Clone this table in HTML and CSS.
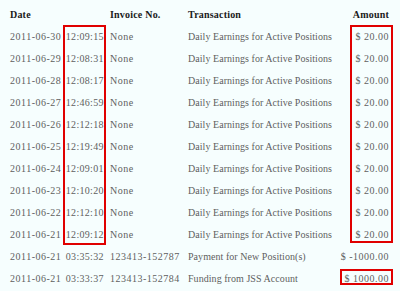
FILE: index.html
```html
<!DOCTYPE html>
<html>
<head>
<meta charset="utf-8">
<link rel="stylesheet" href="styles.css">
</head>
<body>
<div class="page">
  <div class="row head">
    <div class="c-date">Date</div>
    <div class="c-inv">Invoice No.</div>
    <div class="c-tr">Transaction</div>
    <div class="c-amt">Amount</div>
  </div>
  <div class="row"><div class="c-date">2011-06-30 <span class="tm">12:09:15</span></div><div class="c-inv">None</div><div class="c-tr">Daily Earnings for Active Positions</div><div class="c-amt">$ 20.00</div></div>
  <div class="row"><div class="c-date">2011-06-29 <span class="tm">12:08:31</span></div><div class="c-inv">None</div><div class="c-tr">Daily Earnings for Active Positions</div><div class="c-amt">$ 20.00</div></div>
  <div class="row"><div class="c-date">2011-06-28 <span class="tm">12:08:17</span></div><div class="c-inv">None</div><div class="c-tr">Daily Earnings for Active Positions</div><div class="c-amt">$ 20.00</div></div>
  <div class="row"><div class="c-date">2011-06-27 <span class="tm">12:46:59</span></div><div class="c-inv">None</div><div class="c-tr">Daily Earnings for Active Positions</div><div class="c-amt">$ 20.00</div></div>
  <div class="row"><div class="c-date">2011-06-26 <span class="tm">12:12:18</span></div><div class="c-inv">None</div><div class="c-tr">Daily Earnings for Active Positions</div><div class="c-amt">$ 20.00</div></div>
  <div class="row"><div class="c-date">2011-06-25 <span class="tm">12:19:49</span></div><div class="c-inv">None</div><div class="c-tr">Daily Earnings for Active Positions</div><div class="c-amt">$ 20.00</div></div>
  <div class="row"><div class="c-date">2011-06-24 <span class="tm">12:09:01</span></div><div class="c-inv">None</div><div class="c-tr">Daily Earnings for Active Positions</div><div class="c-amt">$ 20.00</div></div>
  <div class="row"><div class="c-date">2011-06-23 <span class="tm">12:10:20</span></div><div class="c-inv">None</div><div class="c-tr">Daily Earnings for Active Positions</div><div class="c-amt">$ 20.00</div></div>
  <div class="row"><div class="c-date">2011-06-22 <span class="tm">12:12:10</span></div><div class="c-inv">None</div><div class="c-tr">Daily Earnings for Active Positions</div><div class="c-amt">$ 20.00</div></div>
  <div class="row"><div class="c-date">2011-06-21 <span class="tm">12:09:12</span></div><div class="c-inv">None</div><div class="c-tr">Daily Earnings for Active Positions</div><div class="c-amt">$ 20.00</div></div>
  <div class="row"><div class="c-date">2011-06-21 <span class="tm">03:35:32</span></div><div class="c-inv">123413-152787</div><div class="c-tr">Payment for New Position(s)</div><div class="c-amt">$ -1000.00</div></div>
  <div class="row"><div class="c-date">2011-06-21 <span class="tm">03:33:37</span></div><div class="c-inv">123413-152784</div><div class="c-tr">Funding from JSS Account</div><div class="c-amt">$ 1000.00</div></div>

  <div class="mark mark-time"></div>
  <div class="mark mark-amt"></div>
  <div class="mark mark-fund"></div>
</div>
</body>
</html>
```
FILE: styles.css
```css
html, body {
  margin: 0;
  padding: 0;
  background: #f6fefe;
}
.page {
  position: relative;
  width: 400px;
  height: 291px;
  padding: 3px 11px 0 10px;
  box-sizing: border-box;
  font-family: "Liberation Serif", "Times New Roman", serif;
  font-size: 10px;
  color: #5f5f5f;
}
.row {
  display: grid;
  grid-template-columns: 100px 78px 1fr auto;
  height: 22px;
  align-items: center;
  white-space: nowrap;
}
.head {
  color: #1a1a1a;
  font-weight: bold;
  letter-spacing: 0.2px;
}
.row:not(.head) .c-date,
.row:not(.head) .c-inv,
.row:not(.head) .c-amt {
  letter-spacing: 0.5px;
}
.row:not(.head) .c-date {
  word-spacing: 1.5px;
}
.row:not(.head) .tm {
  letter-spacing: 0.3px;
}
.row:not(.head) .c-tr {
  letter-spacing: 0.05px;
}
.c-amt {
  text-align: right;
}
.mark {
  position: absolute;
  border: 2px solid #e00000;
  box-sizing: border-box;
}
.mark-time {
  left: 63px;
  top: 25px;
  width: 43px;
  height: 220px;
}
.mark-amt {
  left: 350px;
  top: 25px;
  width: 43px;
  height: 218px;
}
.mark-fund {
  left: 340px;
  top: 269px;
  width: 53px;
  height: 16px;
}
```
